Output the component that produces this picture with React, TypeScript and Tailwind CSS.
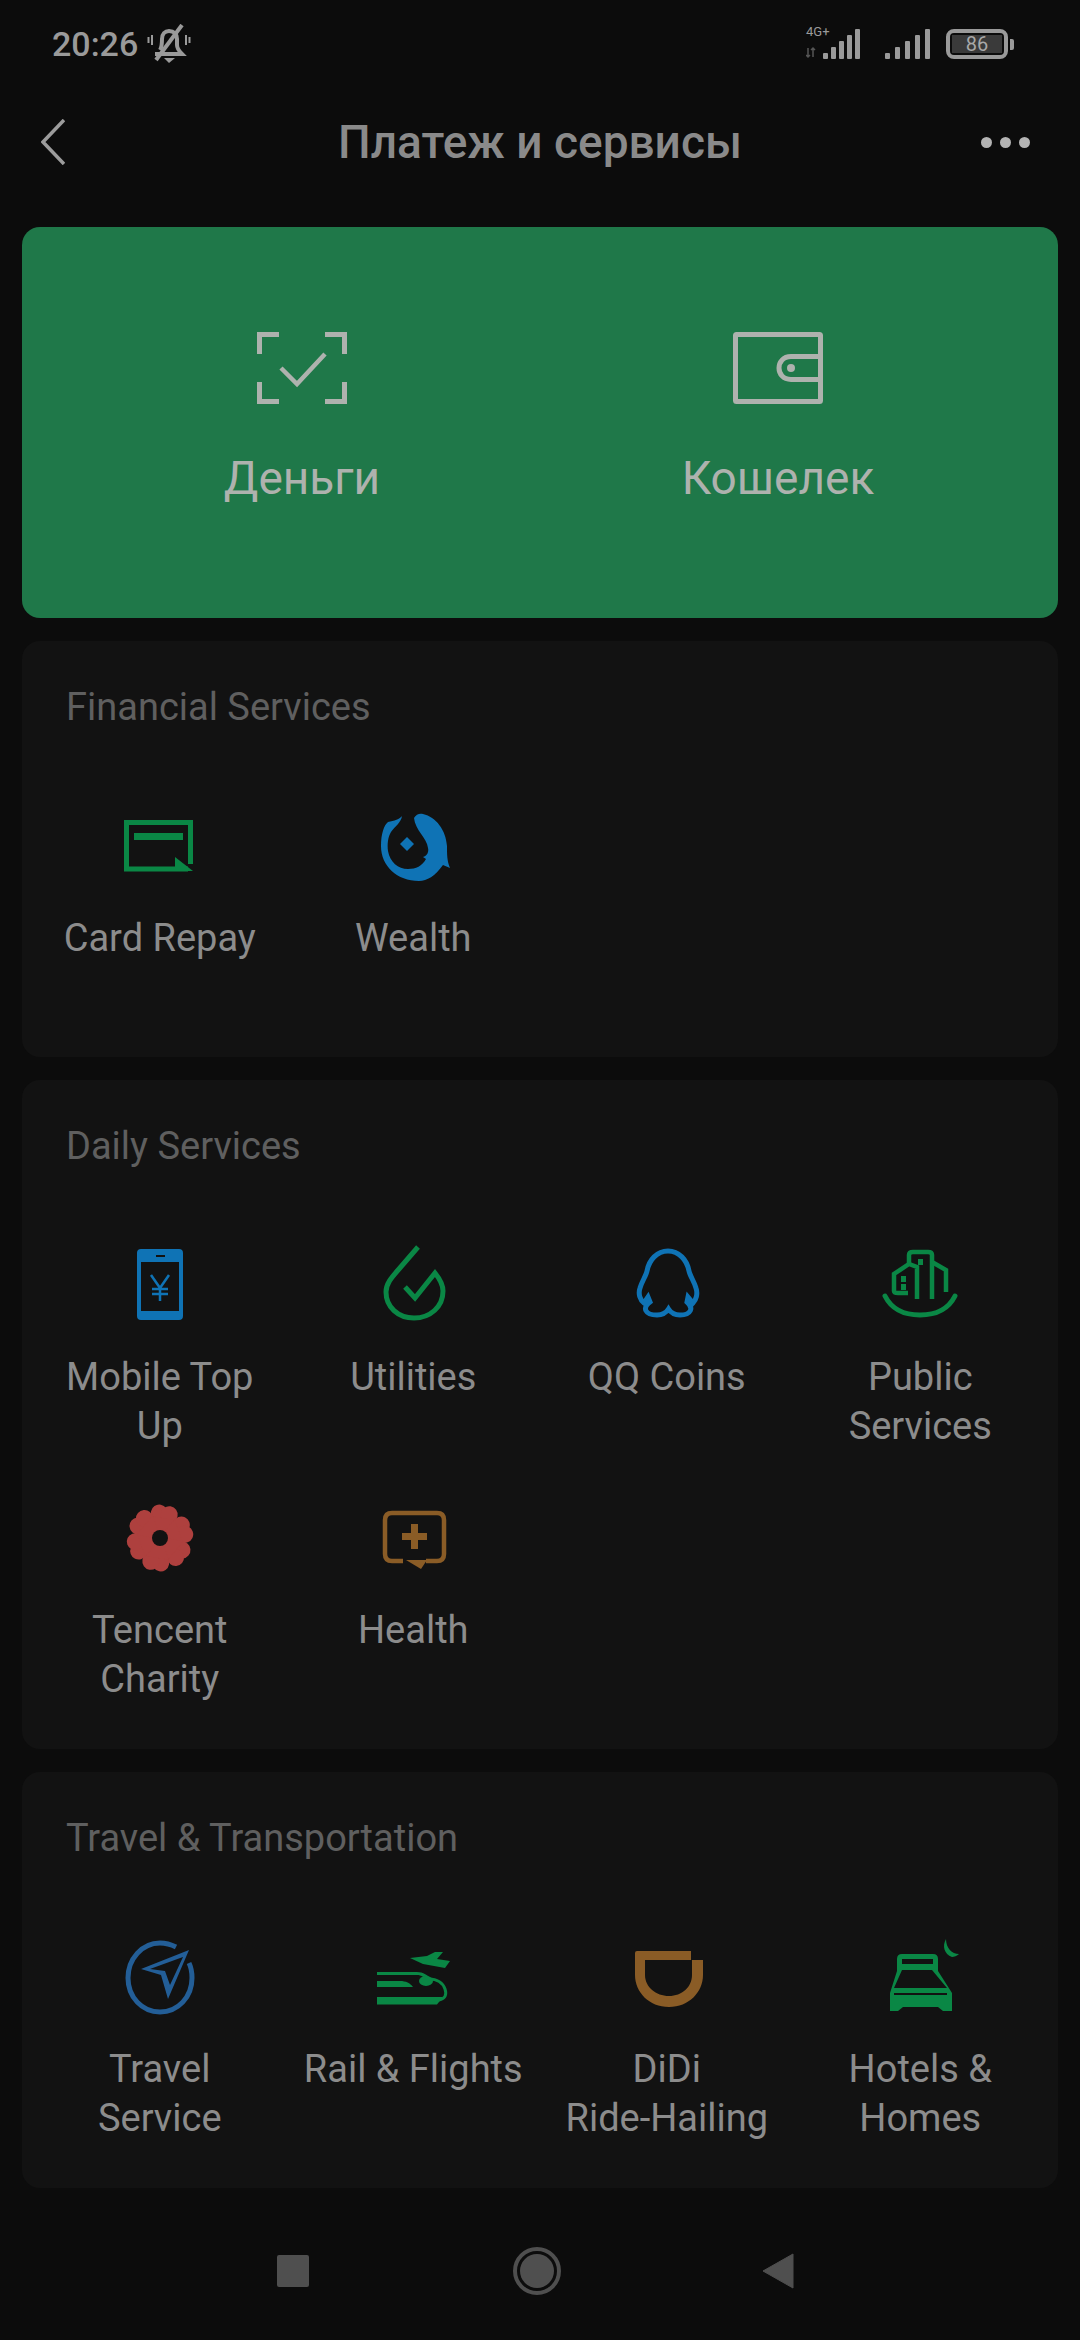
import type { ReactNode } from "react";

const GREEN = "#0a8745";
const BLUE = "#0f73b5";
const NAVY = "#235e97";
const BROWN = "#8a5c26";
const RED = "#ae403e";

function Icon({ children, raise = 0 }: { children: ReactNode; raise?: number }) {
  return (
    <svg width="80" height="80" viewBox={`0 ${raise} 80 80`} className="block overflow-visible">
      {children}
    </svg>
  );
}

const CardRepay = (
  <Icon>
    <path d="M68 63H6.500V16.500H70.500V58" fill="none" stroke={GREEN} strokeWidth="5" />
    <rect x="14" y="27" width="49" height="7" fill={GREEN} />
    <path d="M55 51L73 65H55Z" fill={GREEN} />
  </Icon>
);

const Wealth = (
  <Icon>
    <path
      d="M41 12C43 8 47 7 50 8C63 11 73 24 74 40C74 48 74 55 77 62L70 59C62 70 54 75 46 75C24 75 8 60 8 40C8 28 11 19 15 16C21 15 27 13 29 10C28 17 22 20 18 26C15 31 14 38 15 45C17 56 25 63 35 63C43 63 49 60 53 53L50 51C54 50 56 46 55 42C54 32 42 24 41 12Z"
      fill={BLUE}
    />
    <path d="M34 31L41 38L34 45L27 38Z" fill={BLUE} />
  </Icon>
);

const Phone = (
  <Icon raise={3}>
    <path fillRule="evenodd" d="M21 7H59Q63 7 63 11V74Q63 78 59 78H21Q17 78 17 74V11Q17 7 21 7ZM21 20V69H59V20ZM36 13V15H45V13Z" fill={BLUE} />
    <path d="M31 33L40 46L49 33M40 46V59M32 47H48M32 52H48" fill="none" stroke={BLUE} strokeWidth="2.500" />
  </Icon>
);

const Utilities = (
  <Icon raise={3}>
    <path
      d="M45 5L26 27C18 36 13 42 13 50C13 65 25 76 41 76C57 76 70 65 70 49C70 42 66 36 62 31L42 56L32 45"
      fill="none"
      stroke={GREEN}
      strokeWidth="5"
    />
  </Icon>
);

const QQ = (
  <Icon raise={3}>
    <path
      d="M41 9C52 9 60 18 62 29C63 34 67 39 69 46C71 52 69 58 66 61L61 55L60 60C67 66 64 73 53 73C48 73 44 71 41.500 67C39 71 35 73 30 73C18 73 15 66 23 60L21 55L17 61C13 58 11 52 13 46C15 39 19 34 20 29C22 18 30 9 41 9Z"
      fill="none"
      stroke={BLUE}
      strokeWidth="5"
    />
  </Icon>
);

const PublicServices = (
  <Icon raise={3}>
    <g fill="none" stroke={GREEN} strokeWidth="4.500">
      <path d="M29 22V13Q29 10 33 10H48Q52 10 52 13V57" />
      <path d="M37 57V25L29 22L14 32V49Q14 51 18 51H28" />
      <path d="M52 20L66 28V50" />
      <path d="M5 54C12 68 26 73 40 73C54 73 68 68 75 54" strokeWidth="5" strokeLinecap="round" />
    </g>
    <rect x="38" y="17" width="5" height="6" fill={GREEN} />
    <rect x="21" y="34" width="5" height="6" fill={GREEN} />
    <rect x="21" y="42" width="5" height="6" fill={GREEN} />
  </Icon>
);

const Charity = (
  <Icon>
    <g fill={RED}>
      {[10, 70, 130, 190, 250, 310].map((a) => (
        <g key={a} transform={`rotate(${a} 40 40)`}>
          <circle cx="35" cy="15.500" r="8.500" />
          <circle cx="45" cy="15.500" r="8.500" />
          <path d="M27.500 20L40 42L52.500 20Z" />
        </g>
      ))}
    </g>
    <circle cx="40" cy="40" r="8" fill="#121212" />
  </Icon>
);

const Health = (
  <Icon>
    <path
      d="M30 63H19Q12 63 12 56V22Q12 15 19 15H64Q71 15 71 22V56Q71 63 64 63H53"
      fill="none"
      stroke={BROWN}
      strokeWidth="4.500"
    />
    <path d="M33 62L54 62L48 71Z" fill={BROWN} />
    <path d="M38 26H45V35H54V42H45V51H38V42H29V35H38Z" fill={BROWN} />
  </Icon>
);

const Travel = (
  <Icon>
    <path
      d="M56 10C50 7 45 6 40 6C22 6 8 22 8 41C8 60 22 75 40 75C58 75 72 60 72 41C72 34 71 30 69 26"
      fill="none"
      stroke={NAVY}
      strokeWidth="5"
    />
    <path fillRule="evenodd" d="M69 13L48 62L41 38L21 32ZM30 32L45 34L50 48L63 20Z" fill={NAVY} />
  </Icon>
);

const Rail = (
  <Icon>
    <path d="M37 21L54 19L62 15H70L64 22L77 24L72 31L50 27Z" fill={GREEN} />
    <path d="M4 35H44C50 35 55 38 59 43L56 45C52 40 48 38 44 38H4Z" fill={GREEN} />
    <ellipse cx="53" cy="44" rx="7" ry="5" fill={GREEN} />
    <path d="M56 42C64 42 70 46 72 52C74 58 72 62 66 63" fill="none" stroke={GREEN} strokeWidth="3" />
    <path d="M4 44H27C33 44 37 46 40 50H4Z" fill={GREEN} />
    <path d="M4 60H70L64 67.500H4Z" fill={GREEN} />
  </Icon>
);

const Didi = (
  <Icon>
    <path
      d="M8 16Q8 14 10 14H64V23H76V38C76 55 62 70 42 70C22 70 8 55 8 38ZM18 23V38C18 50 29 59 42 59C55 59 65 50 65 38V23Z"
      fill={BROWN}
      fillRule="evenodd"
    />
  </Icon>
);

const Hotel = (
  <Icon>
    <path
      fillRule="evenodd"
      d="M22 17H53Q58 17 58 22V34L72 56V74H63L58 70H23L18 74H10V56L17 34V22Q17 17 22 17ZM22 22V27H53V22ZM22 33L14 51H67L52 33ZM14 56V58H67V56Z"
      fill={GREEN}
    />
    <path d="M66 2C62 9 64 17 72 20C74 20 77 19 79 17C72 17 66 11 66 2Z" fill={GREEN} />
  </Icon>
);

function Item({ icon, label }: { icon: ReactNode; label: string }) {
  return (
    <div className="flex flex-col items-center">
      <div className="h-20 w-20">{icon}</div>
      <div className="mt-[28px] h-[98px] w-[225px] whitespace-pre-line text-center text-[38px] leading-[49px] text-[#8c8c8c]">{label}</div>
    </div>
  );
}

function Section({ title, children }: { title: string; children: ReactNode }) {
  return (
    <section className="mx-[22px] rounded-[18px] bg-[#121212] px-[11px] pt-[45px] pb-[45px]">
      <h2 className="pl-[33px] text-[38px] leading-[42px] text-[#5f5f5f]">{title}</h2>
      <div className="mt-[78px] grid grid-cols-4 gap-y-[47px]">{children}</div>
    </section>
  );
}

export default function App() {
  return (
    <div className="flex h-[2340px] flex-col bg-[#0c0c0c]" style={{ fontFamily: "Roboto, sans-serif" }}>
      {/* status bar */}
      <div className="flex h-[88px] items-center justify-between pr-[66px] pl-[52px] text-[#9a9a9a]">
        <div className="flex items-center gap-[9px]">
          <span className="text-[34px] font-medium leading-none">20:26</span>
          <svg width="44" height="40" viewBox="0 0 44 40" fill="none" stroke="#9a9a9a" strokeWidth="4">
            <path d="M13 26C15 23 15 19 15 15C15 10 18 7 22 7C27 7 30 10 30 15V21C30 24 32 27 35 30H8" />
            <path d="M35 1L9 36" strokeWidth="4" />
            <path d="M5 11V21M1.500 13V19M39 11V21M42.500 13V19" strokeWidth="2" />
            <path d="M17 34H28L22 39Z" fill="#9a9a9a" stroke="none" />
          </svg>
        </div>
        <div className="flex items-center">
          <div className="relative h-[32px] w-[64px]">
            <span className="absolute top-[-4px] left-0 text-[13px] leading-[16px]">4G+</span>
            <svg width="64" height="32" viewBox="0 0 64 32" className="absolute inset-0" fill="#9a9a9a">
              <path d="M2 20V29M0 27L2 29L4 27M7 29V20M5 22L7 20L9 22" stroke="#555" strokeWidth="1.500" fill="none" />
              <rect x="17" y="25" width="5" height="6" rx="1" />
              <rect x="25" y="19" width="5" height="12" rx="1" />
              <rect x="33" y="13" width="5" height="18" rx="1" />
              <rect x="41" y="7" width="5" height="24" rx="1" />
              <rect x="49" y="1" width="5" height="30" rx="1" />
            </svg>
          </div>
          <svg width="48" height="32" viewBox="0 0 48 32" fill="#9a9a9a" className="ml-[14px]">
            <rect x="1" y="25" width="5" height="6" rx="1" />
            <rect x="11" y="19" width="5" height="12" rx="1" />
            <rect x="21" y="13" width="5" height="18" rx="1" />
            <rect x="31" y="7" width="5" height="24" rx="1" />
            <rect x="41" y="1" width="5" height="30" rx="1" />
          </svg>
          <div className="ml-[14px] flex items-center">
            <div className="flex h-[30px] w-[62px] items-center justify-center rounded-[8px] border-[4px] border-[#9a9a9a] p-[2px]">
              <div className="flex h-full w-full items-center justify-center bg-[#3a3a3a] text-[20px] leading-none text-[#a8a8a8]">86</div>
            </div>
            <div className="ml-[2px] h-[11px] w-[4px] rounded-r-[2px] bg-[#9a9a9a]" />
          </div>
        </div>
      </div>

      {/* title bar */}
      <div className="grid h-[139px] grid-cols-[1fr_auto_1fr] items-center px-[41px] pb-[31px]">
        <svg width="24" height="46" viewBox="0 0 24 46" fill="none" stroke="#9c9c9c" strokeWidth="3.500">
          <path d="M23 1L2 23L23 45" />
        </svg>
        <h1 className="text-[46px] font-medium leading-none text-[#8a8a8a]">Платеж и сервисы</h1>
        <div className="flex justify-end gap-[8px] pr-[9px]">
          <span className="h-[11px] w-[11px] rounded-full bg-[#b4b4b4]" />
          <span className="h-[11px] w-[11px] rounded-full bg-[#b4b4b4]" />
          <span className="h-[11px] w-[11px] rounded-full bg-[#b4b4b4]" />
        </div>
      </div>

      {/* payment card */}
      <div className="mx-[22px] grid h-[391px] grid-cols-2 rounded-[18px] bg-[#1f7849] px-[42px] pt-[105px] text-[#aeb2ae]">
        <div className="flex flex-col items-center">
          <svg width="90" height="72" viewBox="0 0 90 72" fill="none" stroke="#aeb2ae" strokeWidth="5">
            <path d="M22 2.500H2.500V22M68 2.500H87.500V22M2.500 50V69.500H22M87.500 50V69.500H68" />
            <path d="M24 36L40 52L68 22" strokeWidth="4.500" />
          </svg>
          <div className="mt-[46px] text-[46px] leading-[56px]">Деньги</div>
        </div>
        <div className="flex flex-col items-center">
          <svg width="90" height="72" viewBox="0 0 90 72" fill="none" stroke="#aeb2ae" strokeWidth="5">
            <rect x="2.500" y="2.500" width="85" height="67" rx="1" />
            <path d="M88 24.500H58C42 24.500 42 47.500 58 47.500H88" />
            <circle cx="58" cy="36" r="4" fill="#aeb2ae" stroke="none" />
          </svg>
          <div className="mt-[46px] text-[46px] leading-[56px]">Кошелек</div>
        </div>
      </div>

      <div className="mt-[23px] flex flex-col gap-[23px]">
        <Section title="Financial Services">
          <Item icon={CardRepay} label="Card Repay" />
          <Item icon={Wealth} label="Wealth" />
        </Section>
        <Section title="Daily Services">
          <Item icon={Phone} label="Mobile Top Up" />
          <Item icon={Utilities} label="Utilities" />
          <Item icon={QQ} label="QQ Coins" />
          <Item icon={PublicServices} label="Public Services" />
          <Item icon={Charity} label="Tencent Charity" />
          <Item icon={Health} label="Health" />
        </Section>
        <Section title="Travel & Transportation">
          <Item icon={Travel} label="Travel Service" />
          <Item icon={Rail} label="Rail & Flights" />
          <Item icon={Didi} label={"DiDi\nRide-Hailing"} />
          <Item icon={Hotel} label="Hotels & Homes" />
        </Section>
      </div>

      {/* android nav */}
      <div className="mt-[59px] flex items-center pl-[277px]">
        <div className="h-[32px] w-[32px] rounded-[2px] bg-[#4f4f4f]" />
        <div className="ml-[204px] flex h-[48px] w-[48px] items-center justify-center rounded-full border-[4px] border-[#4f4f4f]">
          <div className="h-[34px] w-[34px] rounded-full bg-[#4f4f4f]" />
        </div>
        <svg width="32" height="38" viewBox="0 0 32 38" className="ml-[201px]">
          <path d="M31 2V36L1 19Z" fill="#4f4f4f" stroke="#4f4f4f" strokeLinejoin="round" strokeWidth="1" />
        </svg>
      </div>
    </div>
  );
}
